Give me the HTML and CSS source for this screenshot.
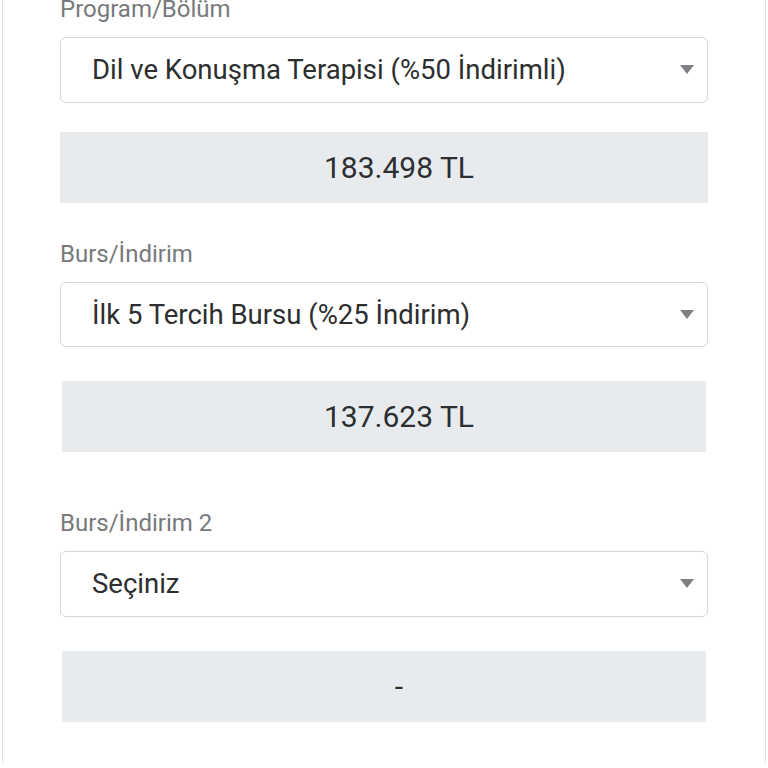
FILE: index.html
```html
<!DOCTYPE html>
<html lang="tr">
<head>
    <meta charset="UTF-8">
    <meta name="viewport" content="width=device-width, initial-scale=1.0">
    <title>Ücret Hesaplama</title>
    <link rel="stylesheet" href="styles.css">
</head>
<body>
    <div class="card">
        <!-- PROGRAM -->
        <div class="field first">
            <label class="field-label" for="program-select">Program/Bölüm</label>
            <div class="select-box" id="program-select">
                <span class="select-text">Dil ve Konuşma Terapisi (%50 İndirimli)</span>
                <span class="select-arrow"></span>
            </div>
            <div class="price-box">183.498 TL</div>
        </div>

        <!-- BURS 1 -->
        <div class="field">
            <label class="field-label" for="burs-select">Burs/İndirim</label>
            <div class="select-box" id="burs-select">
                <span class="select-text">İlk 5 Tercih Bursu (%25 İndirim)</span>
                <span class="select-arrow"></span>
            </div>
            <div class="price-box narrow">137.623 TL</div>
        </div>

        <!-- BURS 2 -->
        <div class="field second">
            <label class="field-label" for="burs2-select">Burs/İndirim 2</label>
            <div class="select-box" id="burs2-select">
                <span class="select-text">Seçiniz</span>
                <span class="select-arrow"></span>
            </div>
            <div class="price-box narrow">-</div>
        </div>
    </div>
</body>
</html>
```

FILE: styles.css
```css
:root {
    --text-color: #2c2e30;
    --label-color: #77797c;
    --border-color: #d2d4d6;
    --price-bg: #e8ebee;
    --arrow-color: #7e8083;
}

* { box-sizing: border-box; margin: 0; padding: 0; }

body {
    font-family: Roboto, "Noto Sans", sans-serif;
    background-color: #ffffff;
    color: var(--text-color);
    height: 100vh;
    overflow: hidden;
}

.card {
    margin: 0 2px;
    height: 100%;
    border-left: 1px solid #e3e3e3;
    border-right: 1px solid #e3e3e3;
    padding: 0 57px;
}

.field { display: flex; flex-direction: column; }
.field.first { margin-top: -5px; }
.field + .field { margin-top: 37px; }
.field.second { margin-top: 57px; }

.field-label {
    font-size: 24px;
    line-height: 28px;
    color: var(--label-color);
    margin-bottom: 14px;
}

.select-box {
    display: flex;
    align-items: center;
    justify-content: space-between;
    height: 65.5px;
    border: 1.5px solid var(--border-color);
    border-radius: 6px;
    padding: 0 13px 0 31px;
}

.select-text {
    font-size: 27.5px;
}

.select-arrow {
    width: 0;
    height: 0;
    border-left: 7px solid transparent;
    border-right: 7px solid transparent;
    border-top: 9px solid var(--arrow-color);
}

.price-box {
    margin-top: 29px;
    height: 71px;
    padding-left: 30px;
    background-color: var(--price-bg);
    display: flex;
    align-items: center;
    justify-content: center;
    font-size: 30px;
}

.price-box.narrow { margin: 34px 2px 0; }
```
